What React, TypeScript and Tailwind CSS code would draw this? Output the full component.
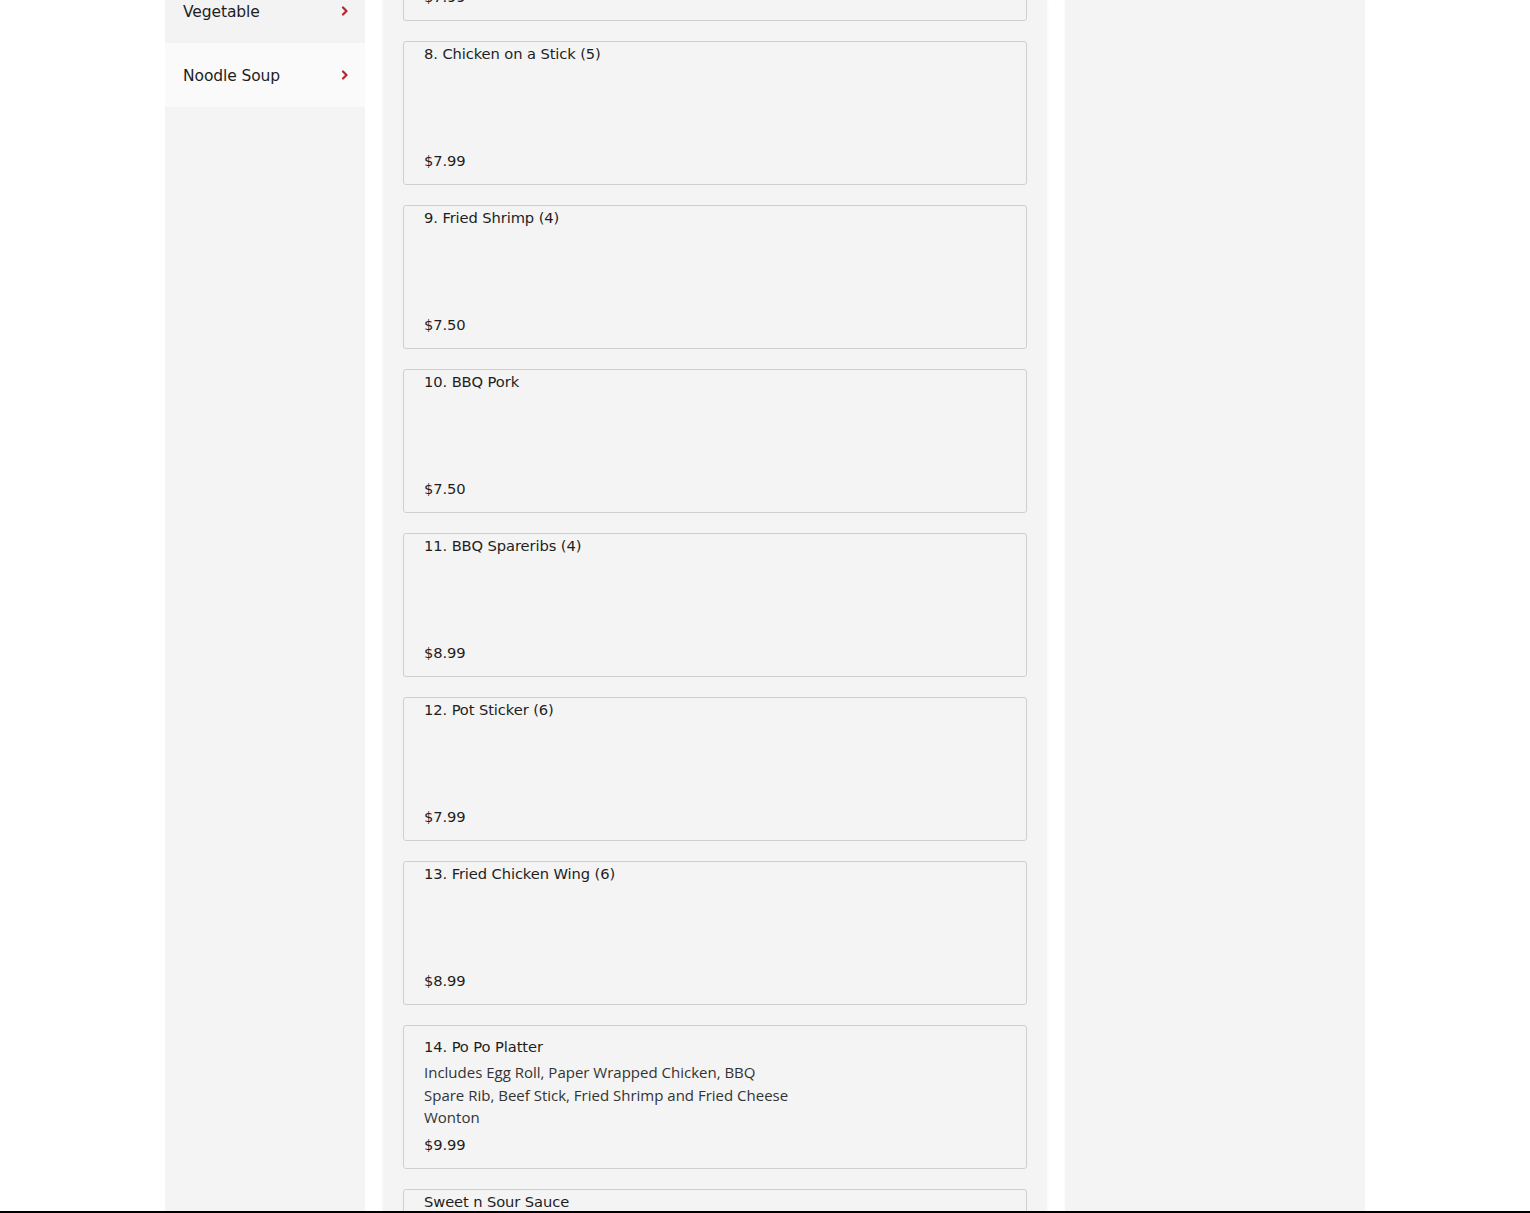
import type { ReactNode } from "react"

interface MenuItem {
  name: string
  price: string
  description?: string
}

const categories = ["Vegetable", "Noodle Soup"]

const items: MenuItem[] = [
  { name: "7. Paper Wrapped Chicken (6)", price: "$7.99" },
  { name: "8. Chicken on a Stick (5)", price: "$7.99" },
  { name: "9. Fried Shrimp (4)", price: "$7.50" },
  { name: "10. BBQ Pork", price: "$7.50" },
  { name: "11. BBQ Spareribs (4)", price: "$8.99" },
  { name: "12. Pot Sticker (6)", price: "$7.99" },
  { name: "13. Fried Chicken Wing (6)", price: "$8.99" },
  {
    name: "14. Po Po Platter",
    price: "$9.99",
    description:
      "Includes Egg Roll, Paper Wrapped Chicken, BBQ Spare Rib, Beef Stick, Fried Shrimp and Fried Cheese Wonton",
  },
  { name: "Sweet n Sour Sauce", price: "$0.50" },
]

const heading = "font-['DejaVu_Sans',sans-serif] text-[14.7px] tracking-[-0.1px] text-[#1e1e1e]"

function Chevron() {
  return (
    <svg width="8" height="10" viewBox="0 0 8 10" className="shrink-0">
      <polyline
        points="2,1.5 5.5,5 2,8.5"
        fill="none"
        stroke="#b3262c"
        strokeWidth="2.2"
        strokeLinecap="round"
        strokeLinejoin="round"
      />
    </svg>
  )
}

function CategoryLink({ label, shade }: { label: string; shade: string }) {
  return (
    <div className={`flex h-[64px] items-center justify-between pl-[18px] pr-[16px] ${shade}`}>
      <span className="pt-[4px] font-['DejaVu_Sans',sans-serif] text-[15.5px] tracking-[-0.1px] text-[#1e1e1e]">
        {label}
      </span>
      <Chevron />
    </div>
  )
}

function Card({ item }: { item: MenuItem }): ReactNode {
  if (item.description) {
    return (
      <div className="flex h-[144px] flex-col rounded-[3px] border border-[#cfcfcf] bg-[#f4f4f4] px-[20px] pt-[9px] pb-[10px]">
        <div className={`${heading} leading-[24px]`}>{item.name}</div>
        <p className="mt-[2px] max-w-[370px] font-['Open_Sans',sans-serif] text-[15px] leading-[22.5px] text-[#333]">
          {item.description}
        </p>
        <div className={`${heading} mt-[4.5px] leading-[24px]`}>{item.price}</div>
      </div>
    )
  }
  return (
    <div className="flex h-[144px] flex-col justify-between rounded-[3px] border border-[#cfcfcf] bg-[#f4f4f4] px-[20px] pt-[0px] pb-[11px]">
      <div className={`${heading} leading-[24px]`}>{item.name}</div>
      <div className={`${heading} leading-[24px]`}>{item.price}</div>
    </div>
  )
}

export default function App() {
  return (
    <div className="h-[1213px] w-full overflow-hidden bg-white">
      <div className="mx-auto flex h-[1211px] w-[1200px] gap-[18px] overflow-hidden">
        <aside className="w-[200px] shrink-0 bg-[#f4f4f4]">
          <div className="-mt-[21px]">
            <CategoryLink label={categories[0]} shade="bg-[#f3f3f3]" />
            <CategoryLink label={categories[1]} shade="bg-[#fafafa]" />
          </div>
        </aside>

        <main className="w-[664px] shrink-0 bg-[#f4f4f4] px-[20px] shadow-[0_0_3px_rgba(0,0,0,0.05)]">
          <div className="-mt-[123px] flex flex-col gap-[20px]">
            {items.map((item) => (
              <Card key={item.name} item={item} />
            ))}
          </div>
        </main>

        <aside className="w-[300px] shrink-0 bg-[#f4f4f4] shadow-[0_0_3px_rgba(0,0,0,0.04)]" />
      </div>
      <div className="h-[2px] w-full bg-black" />
    </div>
  )
}
